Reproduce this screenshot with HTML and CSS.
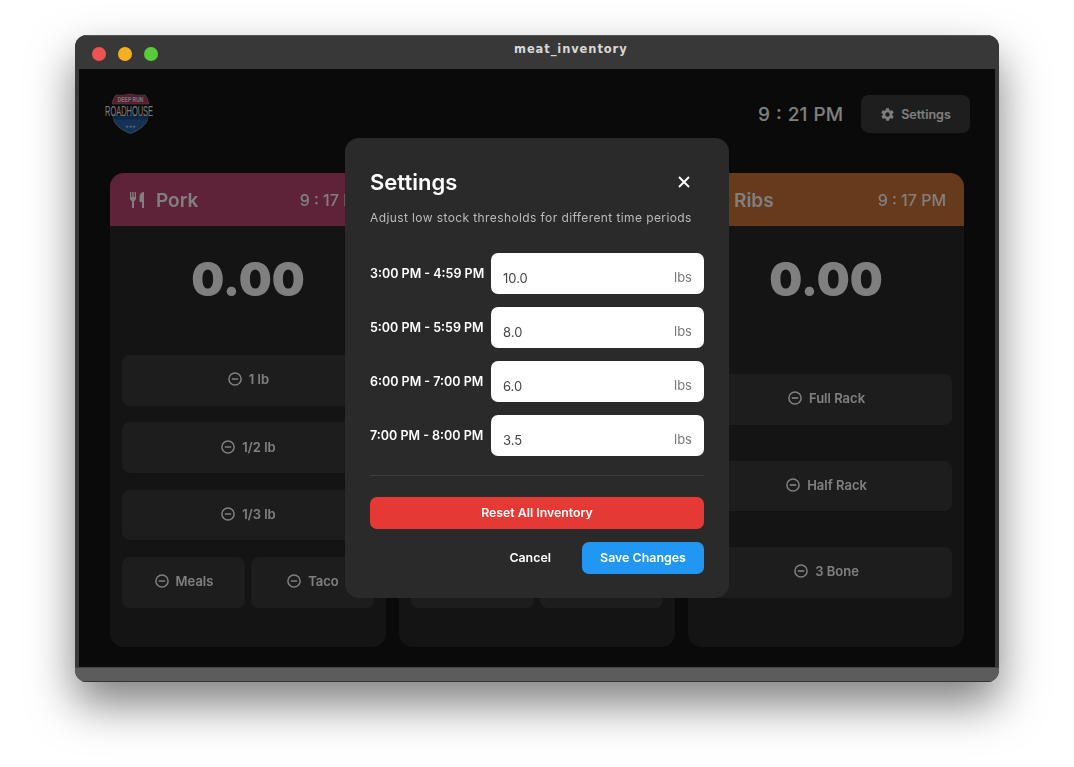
FILE: index.html
```html
<!DOCTYPE html>
<html lang="en">

<head>
    <meta charset="UTF-8">
    <title>meat_inventory</title>
    <link rel="stylesheet" href="styles.css">
</head>

<body>
    <svg width="0" height="0" class="defs">
        <symbol id="minus" viewBox="0 0 16 16">
            <circle cx="8" cy="8" r="6.100" fill="none" stroke="currentColor" stroke-width="1.500"></circle>
            <path d="M4.800 8h6.400" fill="none" stroke="currentColor" stroke-width="1.700"></path>
        </symbol>
        <symbol id="cutlery" viewBox="0 0 18 18">
            <path fill="currentColor" d="M1 1h1.300v5h1V1h1.400v5h1V1H7v6.500c0 1.300-.9 2.200-2 2.500v7H3v-7c-1.100-.3-2-1.200-2-2.500ZM15 1v16h-2v-6h-2.500V5.500C10.500 3 12.500 1 15 1Z"></path>
        </symbol>
    </svg>
    <div class="window">
        <div class="titlebar">
            <span class="light red"></span>
            <span class="light yellow"></span>
            <span class="light green"></span>
            <span class="title">meat_inventory</span>
        </div>
        <div class="app">
            <div class="topbar">
                <svg class="logo" viewBox="0 0 50 40">
                    <path d="M8 10 Q9 4 12 1 Q20 2 26 0 Q33 2 41 1 Q44 4 45 10Z" fill="#b23858" stroke="#999" stroke-width=".6"></path>
                    <path d="M9 22H44C44 30 36 36 26.500 39.500C17 36 9 30 9 22Z" fill="#2466ae" stroke="#aaa" stroke-width=".7"></path>
                    <rect x="9" y="22" width="35" height="3.500" fill="#1a4f8c"></rect>
                    <text x="26.500" y="8" class="logo-top" textLength="26" lengthAdjust="spacingAndGlyphs">DEEP RUN</text>
                    <text x="25" y="21.500" class="logo-main" textLength="48" lengthAdjust="spacingAndGlyphs">ROADHOUSE</text>
                    <text x="26.500" y="33.500" class="logo-stars">★★★</text>
                </svg>
                <div class="clock">9 : 21 PM</div>
                <div class="settings-btn">
                    <svg width="15" height="15" viewBox="0 0 24 24" fill="currentColor"><path d="M19.400 13a7.500 7.500 0 0 0 0-2l2.100-1.600a.5.5 0 0 0 .1-.6l-2-3.500a.5.5 0 0 0-.6-.2l-2.500 1a7.300 7.300 0 0 0-1.700-1l-.4-2.600a.5.5 0 0 0-.5-.4h-4a.5.5 0 0 0-.5.4l-.4 2.600a7.300 7.300 0 0 0-1.700 1l-2.500-1a.5.5 0 0 0-.6.2l-2 3.500a.5.5 0 0 0 .1.6L4.600 11a7.500 7.500 0 0 0 0 2l-2.100 1.600a.5.5 0 0 0-.1.6l2 3.500a.5.5 0 0 0 .6.2l2.500-1a7.300 7.300 0 0 0 1.700 1l.4 2.600a.5.5 0 0 0 .5.4h4a.5.5 0 0 0 .5-.4l.4-2.600a7.300 7.300 0 0 0 1.700-1l2.500 1a.5.5 0 0 0 .6-.2l2-3.500a.5.5 0 0 0-.1-.6ZM12 15.500a3.500 3.500 0 1 1 0-7 3.500 3.500 0 0 1 0 7Z"></path></svg>
                    Settings
                </div>
            </div>

            <div class="cards">
                <div class="card">
                    <div class="card-head pork">
                        <div class="card-name">
                            <svg class="cutlery"><use href="#cutlery"></use></svg>
                            Pork
                        </div>
                        <span class="card-time">9 : 17 PM</span>
                    </div>
                    <div class="card-body">
                        <div class="total">0.00</div>
                        <div class="btn-list tight">
                            <div class="meat-btn"><svg class="ico"><use href="#minus"></use></svg>1 lb</div>
                            <div class="meat-btn"><svg class="ico"><use href="#minus"></use></svg>1/2 lb</div>
                            <div class="meat-btn"><svg class="ico"><use href="#minus"></use></svg>1/3 lb</div>
                            <div class="btn-row">
                                <div class="meat-btn"><svg class="ico"><use href="#minus"></use></svg>Meals</div>
                                <div class="meat-btn"><svg class="ico"><use href="#minus"></use></svg>Taco</div>
                            </div>
                        </div>
                    </div>
                </div>

                <!-- this card sits behind the dialog, only the foot of it shows -->
                <div class="card">
                    <div class="card-head neutral"></div>
                    <div class="card-body">
                        <div class="total"></div>
                        <div class="btn-list tight">
                            <div class="meat-btn"></div>
                            <div class="meat-btn"></div>
                            <div class="meat-btn"></div>
                            <div class="btn-row">
                                <div class="meat-btn"></div>
                                <div class="meat-btn"></div>
                            </div>
                        </div>
                    </div>
                </div>

                <div class="card">
                    <div class="card-head ribs">
                        <div class="card-name">
                            <svg class="cutlery"><use href="#cutlery"></use></svg>
                            Ribs
                        </div>
                        <span class="card-time">9 : 17 PM</span>
                    </div>
                    <div class="card-body">
                        <div class="total">0.00</div>
                        <div class="btn-list wide">
                            <div class="meat-btn"><svg class="ico"><use href="#minus"></use></svg>Full Rack</div>
                            <div class="meat-btn"><svg class="ico"><use href="#minus"></use></svg>Half Rack</div>
                            <div class="meat-btn"><svg class="ico"><use href="#minus"></use></svg>3 Bone</div>
                        </div>
                    </div>
                </div>
            </div>

            <div class="overlay">
                <div class="modal">
                    <div class="modal-head">
                        <h2>Settings</h2>
                        <svg class="close" width="14" height="14" viewBox="0 0 14 14"><path d="M2 2l10 10M12 2L2 12" stroke="#fff" stroke-width="1.900" fill="none"></path></svg>
                    </div>
                    <p class="modal-sub">Adjust low stock thresholds for different time periods</p>

                    <div class="field">
                        <label>3:00 PM - 4:59 PM</label>
                        <div class="input"><span class="value">10.0</span><span class="unit">lbs</span></div>
                    </div>
                    <div class="field">
                        <label>5:00 PM - 5:59 PM</label>
                        <div class="input"><span class="value">8.0</span><span class="unit">lbs</span></div>
                    </div>
                    <div class="field">
                        <label>6:00 PM - 7:00 PM</label>
                        <div class="input"><span class="value">6.0</span><span class="unit">lbs</span></div>
                    </div>
                    <div class="field">
                        <label>7:00 PM - 8:00 PM</label>
                        <div class="input"><span class="value">3.5</span><span class="unit">lbs</span></div>
                    </div>

                    <div class="divider"></div>
                    <div class="reset">Reset All Inventory</div>
                    <div class="modal-actions">
                        <span class="cancel">Cancel</span>
                        <span class="save">Save Changes</span>
                    </div>
                </div>
            </div>
        </div>
        <div class="bottombar"></div>
    </div>
</body>

</html>
```

FILE: styles.css
```css
* {
    box-sizing: border-box;
}

body {
    margin: 0;
    padding: 35px 75px 0;
    height: 767px;
    overflow: hidden;
    background: #fff;
    font-family: Inter, "Liberation Sans", sans-serif;
}

.defs {
    display: block;
    height: 0;
}

.window {
    width: 924px;
    height: 647px;
    display: flex;
    flex-direction: column;
    background: #383838;
    border-radius: 12px;
    overflow: hidden;
    box-shadow: 0 22px 45px rgba(0, 0, 0, .5);
}

.titlebar {
    height: 34px;
    flex: none;
    display: flex;
    align-items: center;
    gap: 12px;
    padding: 2px 0 0 17px;
    background: #383838;
    border-top: 1px solid #555;
}

.light {
    width: 14px;
    height: 14px;
    border-radius: 50%;
}

.light.red {
    background: #ee5350;
}

.light.yellow {
    background: #f5b01f;
}

.light.green {
    background: #58cb3a;
}

.title {
    margin: -10px 0 0 344px;
    color: #d8d8d8;
    font-family: "DejaVu Sans", sans-serif;
    font-size: 11.500px;
    font-weight: 700;
    letter-spacing: .9px;
}

.app {
    position: relative;
    flex: 1;
    margin: 0 4px;
    padding: 26px 25px 0 31px;
    background: #141414;
}

.topbar {
    display: flex;
    align-items: center;
    height: 38px;
    margin-left: -6px;
}

.logo {
    width: 50px;
    height: 40px;
    margin-right: auto;
    overflow: visible;
}

.logo-top {
    font-family: "Liberation Sans", sans-serif;
    font-size: 7px;
    font-weight: 700;
    text-anchor: middle;
    fill: #eee;
}

.logo-main {
    font-family: "Liberation Sans", sans-serif;
    font-size: 15px;
    text-anchor: middle;
    fill: #f2f2f2;
}

.logo-stars {
    font-family: "DejaVu Sans", sans-serif;
    font-size: 4px;
    text-anchor: middle;
    fill: #ddd;
}

.clock {
    color: #fff;
    font-size: 19px;
    font-weight: 500;
    word-spacing: 1px;
    margin-right: 18px;
}

.settings-btn {
    width: 109px;
    height: 38px;
    display: flex;
    align-items: center;
    justify-content: center;
    gap: 6px;
    border-radius: 8px;
    background: #3c3c3c;
    color: #fff;
    font-size: 12.500px;
    font-weight: 600;
}

.cards {
    display: flex;
    gap: 13px;
    margin-top: 40px;
    will-change: transform;
}

.card {
    width: 276px;
    height: 474px;
    background: #282828;
    border-radius: 14px;
    overflow: hidden;
}

.card-head {
    height: 53px;
    display: flex;
    align-items: center;
    justify-content: space-between;
    padding: 0 18px 0 19px;
    color: #fff;
}

.card-head.pork {
    background: #bd4670;
}

.card-head.ribs {
    background: #ce7438;
}

.card-head.neutral {
    background: #444;
}

.card-name {
    display: flex;
    align-items: center;
    gap: 9px;
    margin-top: 2px;
    font-size: 19px;
    font-weight: 600;
}

.cutlery {
    width: 18px;
    height: 18px;
    margin-top: -2px;
}

.card-time {
    font-size: 16px;
    font-weight: 500;
}

.card-body {
    padding: 0 12px;
}

.total {
    height: 105px;
    padding-top: 20px;
    text-align: center;
    color: #fff;
    font-size: 46.500px;
    font-weight: 900;
    line-height: 66px;
}

.btn-list {
    display: flex;
    flex-direction: column;
}

.btn-list.tight {
    gap: 16.900px;
    margin-top: 24px;
}

.btn-list.wide {
    gap: 36px;
    margin-top: 43px;
}

.btn-row {
    display: flex;
    gap: 6px;
}

.btn-row .meat-btn {
    flex: 1;
}

.meat-btn {
    height: 50.500px;
    display: flex;
    align-items: center;
    justify-content: center;
    gap: 6px;
    padding-bottom: 2px;
    border-radius: 8px;
    background: #3a3a3a;
    color: #fff;
    font-size: 13px;
    font-weight: 600;
}

.ico {
    width: 16px;
    height: 16px;
}

.overlay {
    position: absolute;
    inset: 0;
    background: rgba(0, 0, 0, .5);
}

.modal {
    position: absolute;
    left: 266px;
    top: 69px;
    width: 384px;
    height: 460px;
    padding: 24px 25px 0;
    background: #2a2a2a;
    border-radius: 14px;
    will-change: transform;
}

.modal-head {
    display: flex;
    align-items: center;
    justify-content: space-between;
    height: 40px;
    padding-right: 13px;
}

.modal-head h2 {
    margin: 0;
    color: #fff;
    font-size: 22px;
    font-weight: 600;
}

.modal-sub {
    margin: 8px 0 28px;
    color: #bbb;
    font-size: 12px;
    letter-spacing: .4px;
    white-space: nowrap;
}

.field {
    display: flex;
    align-items: center;
    justify-content: space-between;
    height: 41px;
    margin-bottom: 13px;
}

.field label {
    color: #fff;
    font-size: 12.500px;
    font-weight: 600;
    margin-top: -1px;
}

.input {
    width: 213px;
    height: 41px;
    display: flex;
    justify-content: space-between;
    align-items: center;
    padding: 7px 12px 0;
    background: #fff;
    border-radius: 7px;
    font-size: 13px;
}

.input .value {
    color: #444;
    margin-top: 1px;
}

.input .unit {
    color: #777;
}

.divider {
    height: 1px;
    margin-top: 19px;
    background: #3c3c3c;
}

.reset {
    height: 32px;
    margin-top: 21px;
    padding-bottom: 2px;
    display: flex;
    align-items: center;
    justify-content: center;
    background: #e53935;
    border-radius: 7px;
    color: #fff;
    font-size: 12.300px;
    font-weight: 600;
}

.modal-actions {
    display: flex;
    justify-content: flex-end;
    align-items: center;
    gap: 31px;
    margin-top: 13px;
    font-size: 12.400px;
    font-weight: 600;
    color: #fff;
}

.cancel {
    margin-top: -1px;
}

.save {
    width: 122px;
    height: 32px;
    padding-bottom: 1px;
    display: flex;
    align-items: center;
    justify-content: center;
    background: #2196f3;
    border-radius: 7px;
}

.bottombar {
    height: 15px;
    flex: none;
    background: #5c5c5c;
    border-top: 1px solid #444;
    border-bottom: 1px solid #333;
}
```
